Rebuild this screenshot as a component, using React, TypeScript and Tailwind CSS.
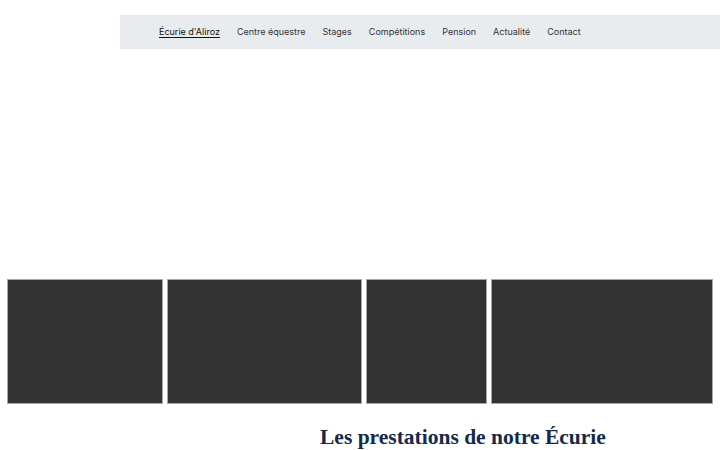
const navItems = [
  "Écurie d'Aliroz",
  "Centre équestre",
  "Stages",
  "Compétitions",
  "Pension",
  "Actualité",
  "Contact",
];

const tiles = ["w-[156px]", "w-[195px]", "w-[121px]", "w-[222px]"];

export default function App() {
  return (
    <div className="w-[720px] h-[450px] overflow-hidden bg-white">
      <div className="pt-[15px] pl-[120px]">
        <nav className="h-[34px] bg-[#e9ecef] flex items-center pl-[39px] gap-[17px] font-['Inter',sans-serif] text-[9px] text-[#333]">
          {navItems.map((item, i) => (
            <span
              key={item}
              className={i === 0 ? "text-[#111] underline underline-offset-2" : ""}
            >
              {item}
            </span>
          ))}
        </nav>
      </div>

      <div className="mt-[230px] px-[7px] flex gap-[4px]">
        {tiles.map((w, i) => (
          <div
            key={i}
            className={`${w} h-[125px] bg-[#333333] border border-[#a8a8a8]`}
          />
        ))}
      </div>

      <h2 className="mt-[23px] pl-[320px] font-['Liberation_Serif',serif] font-bold text-[21.5px] leading-none text-[#132a4c]">
        Les prestations de notre Écurie
      </h2>
    </div>
  );
}
